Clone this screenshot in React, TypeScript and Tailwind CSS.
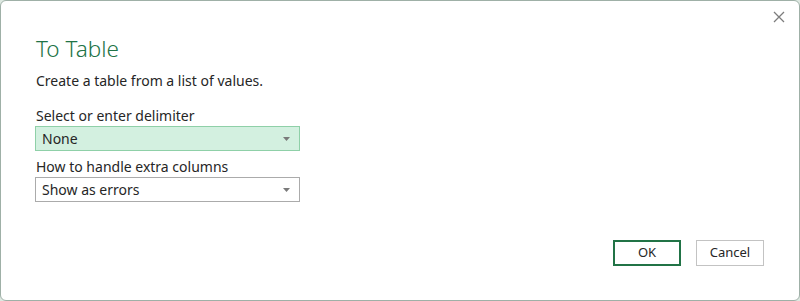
const ChevronDown = () => (
  <svg width="7" height="4" viewBox="0 0 7 4" className="fill-[#7a7a7a]">
    <path d="M0 0h7L3.5 4z" />
  </svg>
);

const Select = ({ value, active }: { value: string; active?: boolean }) => (
  <div
    className={`-ml-px flex h-[25px] w-[265px] items-center justify-between border pl-[6px] pr-[9px] text-[14px] text-[#262626] ${
      active ? "border-[#8fd0a8] bg-[#d3f0e0]" : "border-[#ababab] bg-white"
    }`}
  >
    <span>{value}</span>
    <ChevronDown />
  </div>
);

export default function App() {
  return (
    <div className="h-[301px] w-[800px] bg-[#dde8e1] font-['Segoe_UI','Noto_Sans',sans-serif]">
      <div className="relative flex h-full flex-col rounded-[6px] border border-[#9fb0a7] bg-white px-[35px]">
        <button className="absolute right-[12px] top-[8px] flex h-[16px] w-[16px] items-center justify-center">
          <svg width="12" height="12" viewBox="0 0 12 12" stroke="#7d7d7d" strokeWidth="1.3">
            <path d="M1 1l10 10M11 1L1 11" />
          </svg>
        </button>

        <h1 className="mt-[33px] text-[22.5px] font-light leading-[29px] text-[#217346]">To Table</h1>
        <p className="mt-[8px] text-[14px] leading-[20px] text-[#262626]">Create a table from a list of values.</p>

        <label className="mt-[15px] text-[14px] leading-[20px] text-[#262626]">Select or enter delimiter</label>
        <Select value="None" active />

        <label className="mt-[6px] text-[14px] leading-[20px] text-[#262626]">How to handle extra columns</label>
        <Select value="Show as errors" />

        <div className="mt-[38px] flex justify-end gap-[15px]">
          <button className="h-[26px] w-[68px] border-2 border-[#217346] text-[13px] text-[#262626]">OK</button>
          <button className="h-[26px] w-[68px] border border-[#c3c3c3] text-[13px] text-[#262626]">Cancel</button>
        </div>
      </div>
    </div>
  );
}
